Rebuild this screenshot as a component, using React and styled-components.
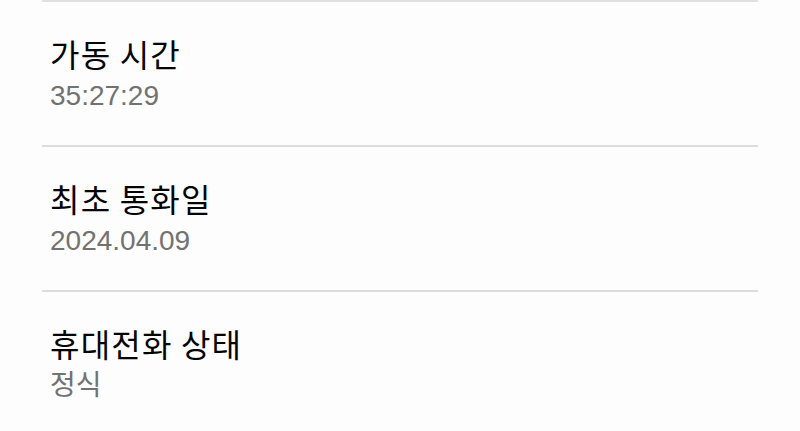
import React from 'react';
import styled, { createGlobalStyle } from 'styled-components';

const GlobalStyle = createGlobalStyle`
  html, body {
    margin: 0;
    padding: 0;
    background: #fdfdfd;
  }
`;

const List = styled.ul`
  list-style: none;
  margin: 0 42px;
  padding: 0;
  border-top: 2px solid #e0e0e0;
  font-family: 'Liberation Sans', 'Noto Sans CJK KR', sans-serif;
`;

const Row = styled.li`
  display: flex;
  flex-direction: column;
  padding: 27px 8px 31px;
  border-bottom: 2px solid #dcdcdc;
`;

const Title = styled.span`
  font-family: 'Noto Sans CJK KR', sans-serif;
  font-size: 32px;
  font-weight: 400;
  letter-spacing: 1.2px;
  line-height: 49px;
  color: #050505;
`;

const Value = styled.span`
  font-size: 28px;
  line-height: 36px;
  color: #727272;
`;

const items = [
  { title: '가동 시간', value: '35:27:29' },
  { title: '최초 통화일', value: '2024.04.09' },
  { title: '휴대전화 상태', value: '정식' },
];

const App = () => (
  <>
    <GlobalStyle />
    <List>
      {items.map(({ title, value }) => (
        <Row key={title}>
          <Title>{title}</Title>
          <Value>{value}</Value>
        </Row>
      ))}
    </List>
  </>
);

export default App;
